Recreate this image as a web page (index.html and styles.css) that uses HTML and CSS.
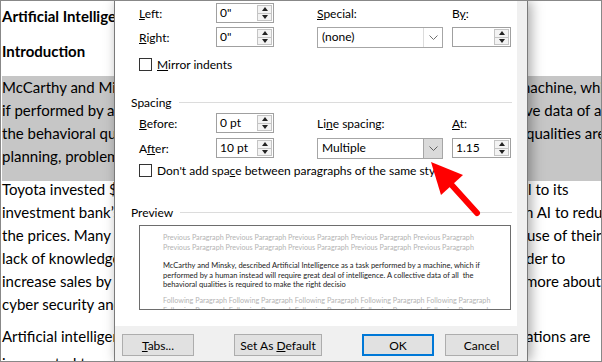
FILE: index.html
```html
<!DOCTYPE html>
<html lang="en">
<head>
    <meta charset="UTF-8">
    <title>Paragraph</title>
    <link rel="stylesheet" href="styles.css">
</head>
<body>
    <div class="screen">
        <!-- document behind the dialog, left part -->
        <div class="doc doc-left">
            <div class="h1">Artificial Intelligence in Business</div>
            <div class="h2">Introduction</div>
            <div class="para sel">
                <div class="ln first">McCarthy and Minsky, described Artificial Intelligence as a task</div>
                <div class="ln">if performed by a human instead will require great deal of</div>
                <div class="ln">the behavioral qualities is required to make the right decision,</div>
                <div class="ln">planning, problem solving and learning.</div>
            </div>
            <div class="para p2">
                <div class="ln">Toyota invested $100 million in a fund</div>
                <div class="ln">investment bank&rsquo;s are using AI</div>
                <div class="ln">the prices. Many people are not aware</div>
                <div class="ln">lack of knowledge about AI</div>
                <div class="ln">increase sales by improving</div>
                <div class="ln">cyber security and fraud detection.</div>
            </div>
            <div class="para p3">
                <div class="ln">Artificial intelligence</div>
                <div class="ln last">is expected to grow</div>
            </div>
        </div>

        <div class="dialog">
            <div class="page">
                <div class="grid indents">
                    <label class="lbl"><u>L</u>eft:</label>
                    <div class="spin"><span class="val">0"</span><span class="arrows"><i class="up"></i><i class="dn"></i></span></div>
                    <span></span>
                    <label class="lbl"><u>S</u>pecial:</label>
                    <span></span>
                    <label class="lbl">B<u>y</u>:</label>

                    <label class="lbl"><u>R</u>ight:</label>
                    <div class="spin"><span class="val">0"</span><span class="arrows"><i class="up"></i><i class="dn"></i></span></div>
                    <span></span>
                    <div class="combo"><span class="val">(none)</span><span class="drop"><svg width="9" height="5" viewBox="0 0 9 5"><polyline points="0.5,0.5 4.5,4.5 8.5,0.5" fill="none" stroke="#707070" stroke-width="1"/></svg></span></div>
                    <span></span>
                    <div class="spin"><span class="val"></span><span class="arrows"><i class="up"></i><i class="dn"></i></span></div>
                </div>

                <div class="check check-mirror"><span class="box"></span><span><u>M</u>irror indents</span></div>

                <div class="group group-spacing">Spacing</div>

                <div class="grid spacing">
                    <label class="lbl"><u>B</u>efore:</label>
                    <div class="spin"><span class="val">0 pt</span><span class="arrows"><i class="up"></i><i class="dn"></i></span></div>
                    <span></span>
                    <label class="lbl">Li<u>n</u>e spacing:</label>
                    <span></span>
                    <label class="lbl"><u>A</u>t:</label>

                    <label class="lbl">A<u>f</u>ter:</label>
                    <div class="spin"><span class="val">10 pt</span><span class="arrows"><i class="up"></i><i class="dn"></i></span></div>
                    <span></span>
                    <div class="combo hot"><span class="val">Multiple</span><span class="drop"><svg width="9" height="5" viewBox="0 0 9 5"><polyline points="0.5,0.5 4.5,4.5 8.5,0.5" fill="none" stroke="#606060" stroke-width="1"/></svg></span></div>
                    <span></span>
                    <div class="spin"><span class="val">1.15</span><span class="arrows"><i class="up"></i><i class="dn"></i></span></div>
                </div>

                <div class="check check-space"><span class="box"></span><span>Don't add spa<u>c</u>e between paragraphs of the same style</span></div>

                <div class="group group-preview">Preview</div>

                <div class="preview">
                    <div class="pv-block pv-ghost">
                        <div>Previous Paragraph Previous Paragraph Previous Paragraph Previous Paragraph Previous Paragraph</div>
                        <div>Previous Paragraph Previous Paragraph Previous Paragraph Previous Paragraph Previous Paragraph</div>
                    </div>
                    <div class="pv-block pv-main">
                        <div>McCarthy and Minsky, described Artificial Intelligence as a task performed by a machine, which if</div>
                        <div>performed by a human instead will require great deal of intelligence. A collective data of all&nbsp; the</div>
                        <div>behavioral qualities is required to make the right decisio</div>
                    </div>
                    <div class="pv-block pv-ghost pv-follow">
                        <div>Following Paragraph Following Paragraph Following Paragraph Following Paragraph Following Paragraph</div>
                        <div>Following Paragraph Following Paragraph Following Paragraph Following Paragraph Following Paragraph</div>
                    </div>
                </div>
            </div>

            <div class="footer">
                <button class="btn btn-tabs"><u>T</u>abs...</button>
                <button class="btn btn-default">Set As <u>D</u>efault</button>
                <button class="btn btn-ok">OK</button>
                <button class="btn btn-cancel">Cancel</button>
            </div>
        </div>

        <!-- document behind the dialog, right part -->
        <div class="doc doc-right">
            <div class="h1">&nbsp;</div>
            <div class="h2">&nbsp;</div>
            <div class="para sel">
                <div class="ln first"><span class="cut m10">machine, which</span></div>
                <div class="ln"><span class="cut m3">ve data of all</span></div>
                <div class="ln"><span class="cut m2">qualities are</span></div>
                <div class="ln">&nbsp;</div>
            </div>
            <div class="para p2">
                <div class="ln"><span class="cut">l to its</span></div>
                <div class="ln"><span class="cut m3">n AI to reduce</span></div>
                <div class="ln"><span class="cut m1">use of their</span></div>
                <div class="ln"><span class="cut m2">der to</span></div>
                <div class="ln"><span class="cut m3">more about</span></div>
                <div class="ln">&nbsp;</div>
            </div>
            <div class="para p3">
                <div class="ln"><span class="cut m2">ations are</span></div>
                <div class="ln">&nbsp;</div>
            </div>
        </div>

        <!-- red callout arrow -->
        <svg class="arrow" width="602" height="362" viewBox="0 0 602 362">
            <line x1="449" y1="182" x2="477" y2="213" stroke="#ff0000" stroke-width="6" stroke-linecap="round"/>
            <polygon points="431,162 463,175 441,195" fill="#ff0000"/>
        </svg>
    </div>
</body>
</html>
```

FILE: styles.css
```css
body {
    margin: 0;
    background: #fff;
}
.screen {
    width: 602px;
    height: 362px;
    box-sizing: border-box;
    border: 1px solid #888;
    display: flex;
    position: relative;
    overflow: hidden;
    background: #fff;
}

/* document text */
.doc {
    font-family: Lato, "Open Sans", sans-serif;
    font-size: 15px;
    line-height: 23px;
    color: #000;
    white-space: nowrap;
    overflow: hidden;
    background: #fff;
    padding-top: 4px;
}
.doc-left {
    width: 113px;
    flex: none;
    padding-left: 1px;
    box-sizing: border-box;
}
.doc-right {
    flex: 1;
}
.doc .h1,
.doc .h2 {
    font-weight: bold;
}
.doc .h2 {
    margin-top: 12px;
}
.doc .sel {
    margin-top: 16px;
    background: #c6c6c6;
    padding-bottom: 13px;
}
.doc .sel .first {
    margin-top: -3px;
}
.doc .p2 {
    margin-top: -3px;
}
.doc .p3 {
    margin-top: 9px;
}
.doc .p3 .last {
    margin-top: 4px;
}
.doc .cut {
    display: inline-block;
}
.m1 { margin-left: -1px; }
.m2 { margin-left: -2px; }
.m3 { margin-left: -3px; }
.m10 { margin-left: -10px; }

/* dialog */
.dialog {
    width: 414px;
    flex: none;
    box-sizing: border-box;
    border-left: 1px solid #7a7a7a;
    border-right: 1px solid #7a7a7a;
    background: #f0f0f0;
    display: flex;
    flex-direction: column;
    position: relative;
    z-index: 1;
    box-shadow: 3px 0 12px rgba(0, 0, 0, 0.35);
    font-family: Lato, "Noto Sans", sans-serif;
    font-size: 12px;
    color: #000;
}
.page {
    width: 402px;
    height: 325px;
    flex: none;
    box-sizing: border-box;
    background: #fff;
    padding-top: 2px;
}
.grid {
    display: grid;
    grid-template-columns: 77px 58px 43px 126px 9px 59px;
    grid-template-rows: 20px 20px;
    row-gap: 4px;
    margin-left: 24px;
}
.grid.spacing {
    margin-top: 3px;
    grid-template-rows: 20px 21px;
    row-gap: 5px;
}
.lbl {
    align-self: center;
    white-space: nowrap;
}
.spin {
    display: flex;
    height: 20px;
    box-sizing: border-box;
    border: 1px solid #a0a0a0;
    background: #fff;
}
.spin .val,
.combo .val {
    flex: 1;
    line-height: 18px;
    padding-left: 3px;
}
.spin .arrows {
    width: 16px;
    display: flex;
    flex-direction: column;
    padding: 1px 1px 1px 0;
    box-sizing: border-box;
}
.spin .arrows i {
    flex: 1;
    border: 1px solid #c4c4c4;
    background: #f3f3f3;
    display: flex;
    align-items: center;
    justify-content: center;
}
.spin .arrows i + i {
    border-top: none;
}
.spin .arrows .up::before {
    content: "";
    border-left: 3px solid transparent;
    border-right: 3px solid transparent;
    border-bottom: 4px solid #222;
}
.spin .arrows .dn::before {
    content: "";
    border-left: 3px solid transparent;
    border-right: 3px solid transparent;
    border-top: 4px solid #222;
}
.combo {
    display: flex;
    height: 21px;
    box-sizing: border-box;
    border: 1px solid #a6a6a6;
    background: #fff;
}
.combo .val {
    padding-left: 4px;
}
.combo .drop {
    width: 18px;
    border-left: 1px solid #dcdcdc;
    display: flex;
    align-items: center;
    justify-content: center;
}
.combo.hot .drop {
    background: #dadada;
    border-left-color: #a6a6a6;
}

.check {
    display: flex;
    align-items: center;
    gap: 5px;
    margin-left: 24px;
    height: 13px;
    white-space: nowrap;
}
.check .box {
    width: 13px;
    height: 13px;
    box-sizing: border-box;
    border: 1px solid #333;
    background: #fff;
    flex: none;
}
.check-mirror {
    margin-top: 11px;
}
.check-space {
    margin-top: 5px;
}

.group {
    display: flex;
    align-items: center;
    gap: 7px;
    height: 16px;
    margin-left: 16px;
    margin-right: 5px;
}
.group::after {
    content: "";
    flex: 1;
    height: 1px;
    background: #dcdcdc;
}
.group-spacing {
    margin-top: 23px;
}
.group-preview {
    margin-top: 27px;
}

.preview {
    margin: 5px 0 0 24px;
    width: 372px;
    height: 85px;
    box-sizing: border-box;
    border: 1px solid #6d6d6d;
    padding: 7px 0 0 23px;
    overflow: hidden;
    font-family: Lato, "Open Sans", sans-serif;
    line-height: 9.6px;
    white-space: nowrap;
}
.pv-ghost {
    color: #b4b4b4;
    font-size: 7.2px;
}
.pv-main {
    color: #222;
    font-size: 7.5px;
    margin-top: 9px;
}
.pv-follow {
    margin-top: 6px;
}

.footer {
    flex: 1;
    display: flex;
    align-items: flex-start;
    padding: 8px 0 0 7px;
}
.btn {
    height: 22px;
    box-sizing: border-box;
    border: 1px solid #adadad;
    background: #e1e1e1;
    font-family: inherit;
    font-size: 12px;
    color: #000;
    padding: 0;
}
.btn-tabs {
    width: 72px;
}
.btn-default {
    width: 88px;
    margin-left: 40px;
}
.btn-ok {
    width: 72px;
    margin-left: 40px;
    border: 2px solid #0078d7;
}
.btn-cancel {
    width: 73px;
    margin-left: 11px;
}

.arrow {
    position: absolute;
    left: -1px;
    top: -1px;
    z-index: 2;
    pointer-events: none;
}
```
